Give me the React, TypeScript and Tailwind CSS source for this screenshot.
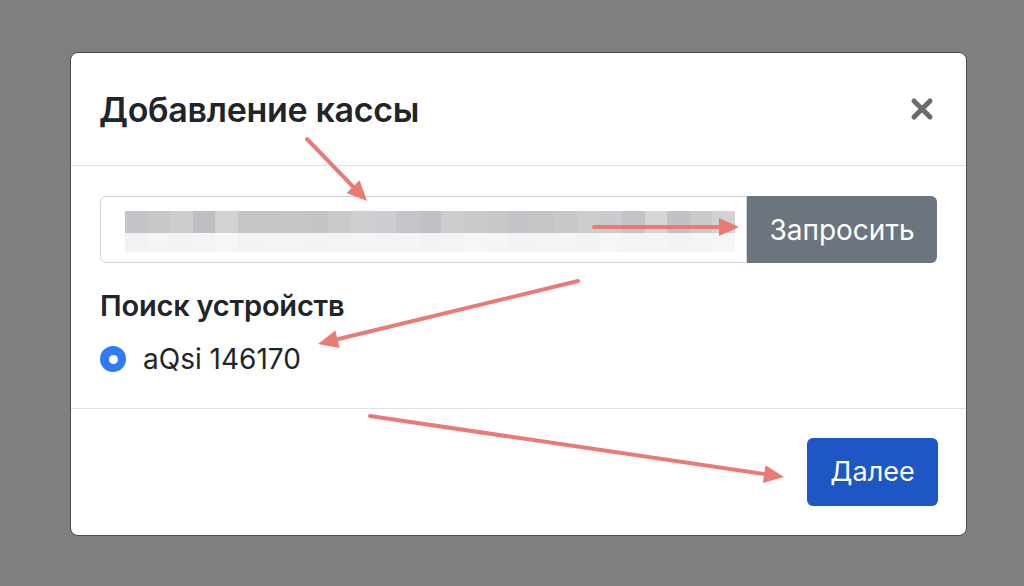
const topRow = [
  '#c2c4c7', '#c5c7c9', '#cbcdcf', '#bdbfc2', '#d2d4d4', '#c3c5c7', '#c3c5c7', '#c4c6c8',
  '#c2c4c6', '#c8cacc', '#cdcfd1', '#cbcdd0', '#c3c5c8', '#bfc1c4', '#cbcdcf', '#c8cacc',
  '#c5c7c9', '#c2c4c7', '#c3c5c7', '#c6c8ca', '#cbcdcf', '#c9cbce', '#c1c3c6', '#d3d5d6',
  '#c0c2c5', '#c8cacc', '#d0d2d4',
]
const bottomRow = [
  '#f1f2f4', '#f4f5f6', '#f2f3f5', '#f3f4f6', '#f5f6f7', '#f2f3f5', '#f3f4f6', '#f4f5f6',
  '#f2f3f4', '#f3f4f6', '#f5f5f7', '#f3f4f5', '#f4f5f6', '#f2f3f5', '#f3f4f6', '#f5f6f7',
  '#f4f5f6', '#f2f3f5', '#f3f4f6', '#f4f5f6', '#f2f3f4', '#f5f6f7', '#f3f4f6', '#f4f5f6',
  '#f2f3f5', '#f4f5f6', '#f5f6f7',
]

const arrows = [
  { x1: 307, y1: 139, x2: 367, y2: 201 },
  { x1: 594, y1: 227, x2: 739, y2: 227 },
  { x1: 578, y1: 281, x2: 318, y2: 344 },
  { x1: 370, y1: 416, x2: 784, y2: 477 },
]

function Arrow({ x1, y1, x2, y2 }: { x1: number; y1: number; x2: number; y2: number }) {
  const dx = x2 - x1
  const dy = y2 - y1
  const len = Math.hypot(dx, dy)
  const ux = dx / len
  const uy = dy / len
  const head = 20
  const half = 9
  const bx = x2 - ux * head
  const by = y2 - uy * head
  const pts = `${x2},${y2} ${bx - uy * half},${by + ux * half} ${bx + uy * half},${by - ux * half}`
  return (
    <g>
      <line x1={x1} y1={y1} x2={bx + ux * 2} y2={by + uy * 2} stroke="#ea7b74" strokeWidth={4} strokeLinecap="round" />
      <polygon points={pts} fill="#ea7b74" />
    </g>
  )
}

export default function App() {
  return (
    <div className="relative w-[1024px] h-[586px] bg-[#7f7f7f] overflow-hidden pt-[52px] pl-[70px] font-['Inter',sans-serif] text-[#212529]">
      <div className="w-[897px] h-[484px] bg-white rounded-[8px] border border-[#4d4d4d] flex flex-col">
        <div className="h-[113px] flex items-center justify-between pl-[28px] pr-[31px] border-b border-[#dee2e6]">
          <h5 className="text-[34px] font-semibold tracking-[-0.3px]">Добавление кассы</h5>
          <svg width="26" height="26" viewBox="0 0 26 26">
            <path d="M5 5 L21 21 M21 5 L5 21" stroke="#6c6c6c" strokeWidth={5} strokeLinecap="round" />
          </svg>
        </div>

        <div className="flex-1 px-[29px] pt-[30px] border-b border-[#dee2e6]">
          <div className="flex h-[67px]">
            <div className="flex-1 border border-[#ced4da] rounded-l-[6px] pl-[24px] pt-[14px]">
              <div className="flex">
                {topRow.map((c, i) => (
                  <div key={i} className="w-[22.6px] h-[22px]" style={{ backgroundColor: c }} />
                ))}
              </div>
              <div className="flex">
                {bottomRow.map((c, i) => (
                  <div key={i} className="w-[22.6px] h-[19px]" style={{ backgroundColor: c }} />
                ))}
              </div>
            </div>
            <button className="w-[190px] bg-[#6c757d] text-white text-[28px] rounded-r-[6px]">
              Запросить
            </button>
          </div>

          <div className="mt-[25px] text-[29px] font-semibold leading-[36px] tracking-[-0.2px]">Поиск устройств</div>
          <label className="mt-[17px] flex items-center gap-[17px]">
            <span className="w-[26px] h-[26px] rounded-full bg-[#2f7bf5] flex items-center justify-center">
              <span className="w-[9px] h-[9px] rounded-full bg-white" />
            </span>
            <span className="text-[28px] leading-[36px]">aQsi 146170</span>
          </label>
        </div>

        <div className="h-[126px] flex items-center justify-end pr-[28px]">
          <button className="w-[131px] h-[68px] bg-[#1e56c6] text-white text-[27px] rounded-[6px]">
            Далее
          </button>
        </div>
      </div>

      <svg className="absolute inset-0 pointer-events-none" width="1024" height="586">
        {arrows.map((a, i) => (
          <Arrow key={i} {...a} />
        ))}
      </svg>
    </div>
  )
}
